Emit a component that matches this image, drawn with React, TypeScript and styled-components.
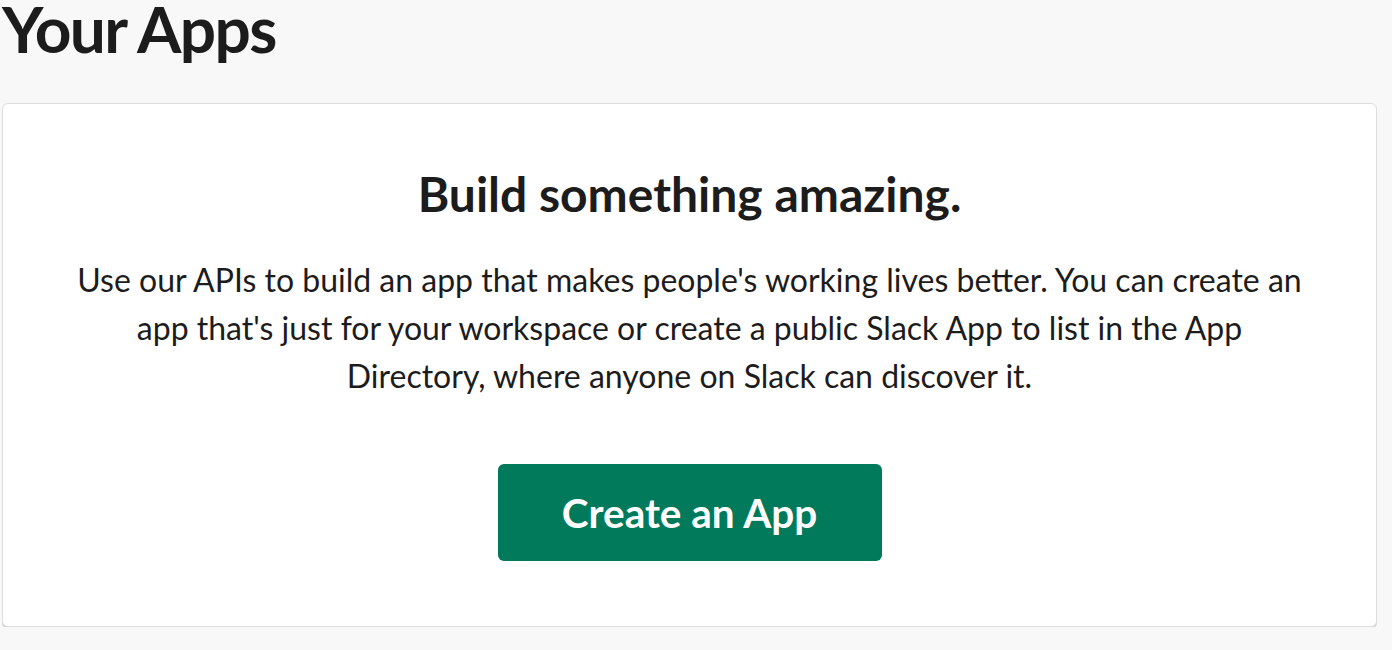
import React from "react";
import styled, { createGlobalStyle } from "styled-components";

const Global = createGlobalStyle`
  html, body { margin: 0; padding: 0; background: #f8f8f8; }
  body { font-family: Lato, "Open Sans", sans-serif; color: #1d1c1d; }
`;

const Page = styled.div`
  padding: 0 15px 0 2px;
  display: flex;
  flex-direction: column;
`;

const Title = styled.h1`
  margin: 0;
  font-size: 64px;
  font-weight: 700;
  line-height: 58px;
  letter-spacing: -1.6px;
`;

const Card = styled.section`
  margin-top: 45px;
  background: #fff;
  border: 1px solid #dddddd;
  border-radius: 6px;
  box-shadow: 0 2px 0 rgba(0, 0, 0, 0.14);
  display: flex;
  flex-direction: column;
  align-items: center;
  padding: 62px 70px 65px;
`;

const Heading = styled.h2`
  margin: 0;
  font-size: 48px;
  font-weight: 700;
  line-height: 56px;
`;

const Body = styled.p`
  margin: 34px 0 0;
  font-size: 32px;
  line-height: 48px;
  text-align: center;
`;

const Button = styled.button`
  margin-top: 64px;
  width: 384px;
  height: 97px;
  border: none;
  border-radius: 6px;
  background: #007a5a;
  color: #fff;
  font-family: Lato, sans-serif;
  font-size: 40.5px;
  font-weight: 700;
  cursor: pointer;
`;

export default function App() {
  return (
    <>
      <Global />
      <Page>
        <Title>Your Apps</Title>
        <Card>
          <Heading>Build something amazing.</Heading>
          <Body>
            Use our APIs to build an app that makes people's working lives better. You can create an app that's just for your workspace or create a public Slack App to list in the App Directory, where anyone on Slack can discover it.
          </Body>
          <Button>Create an App</Button>
        </Card>
      </Page>
    </>
  );
}
